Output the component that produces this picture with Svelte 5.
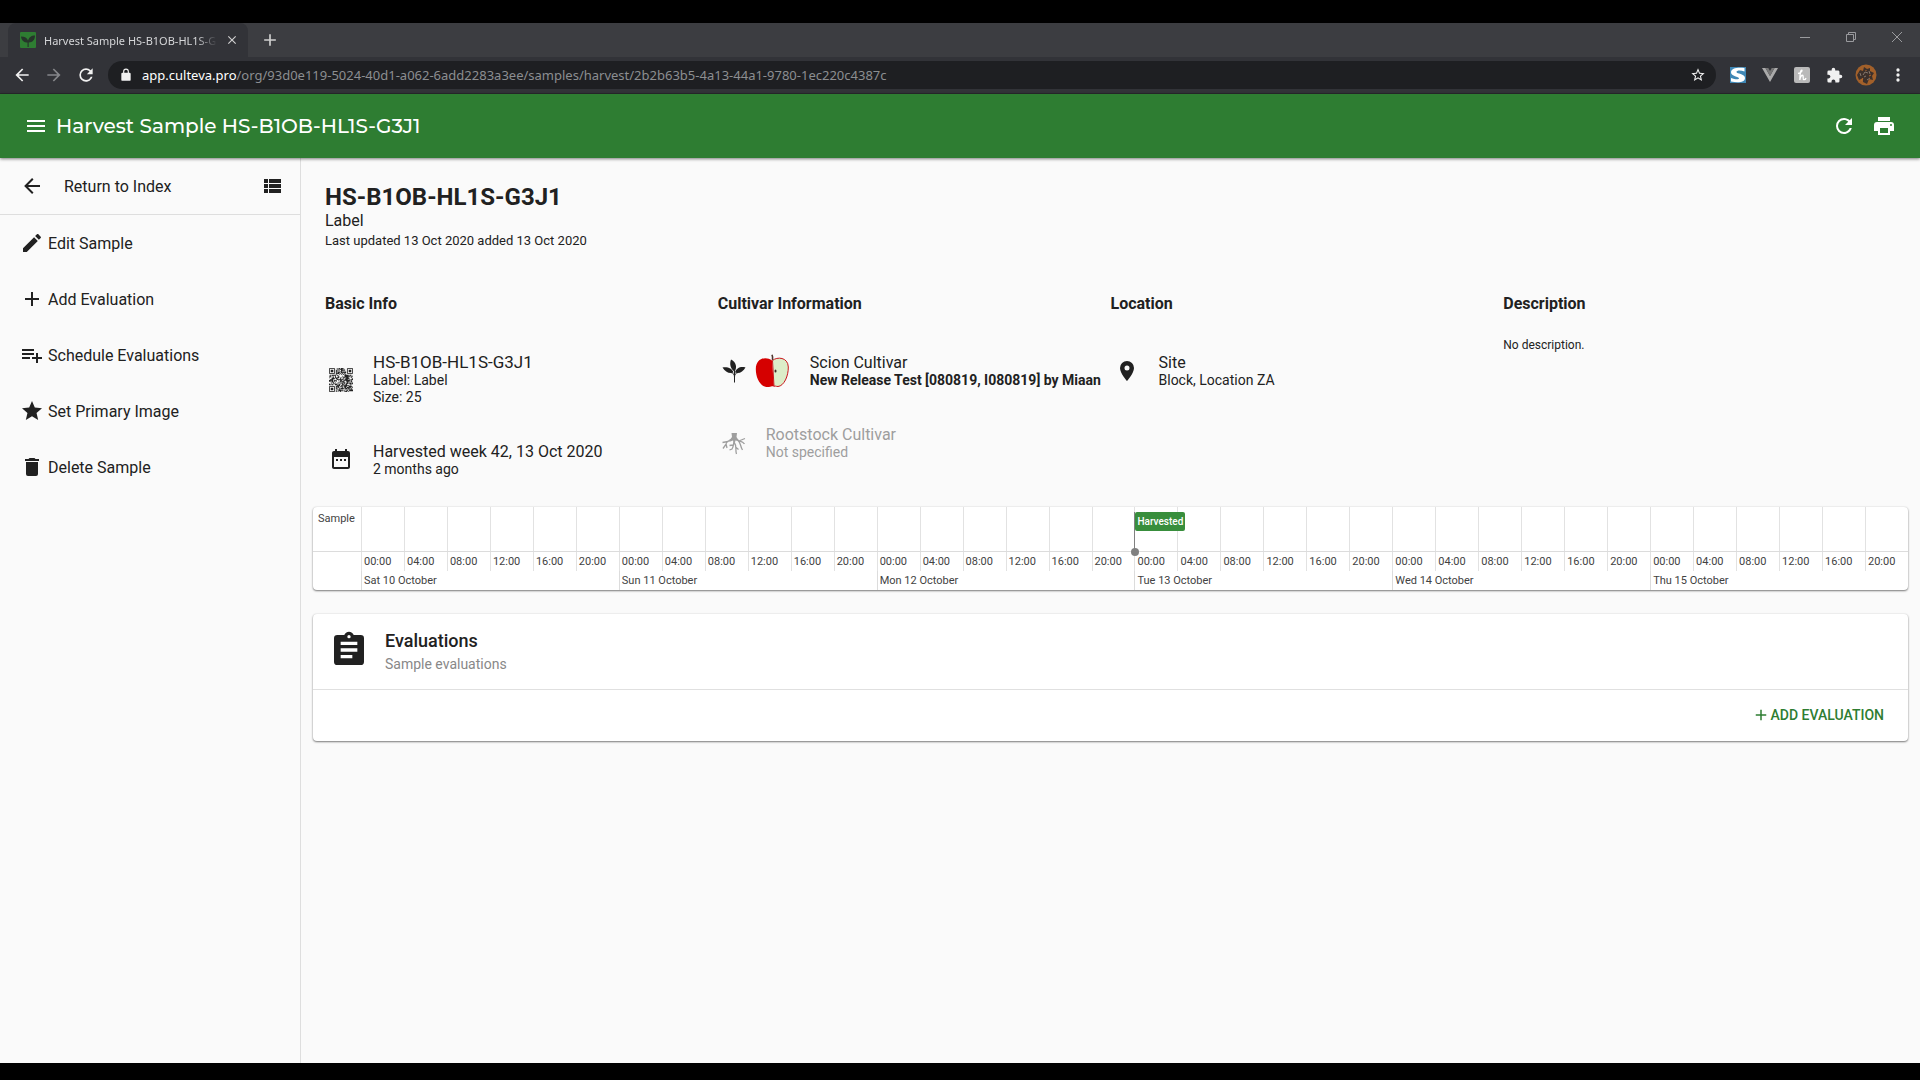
<script>
    const icons = {
        menu: "M3,6H21V8H3V6M3,11H21V13H3V11M3,16H21V18H3V16Z",
        refresh: "M17.65,6.35C16.2,4.9 14.21,4 12,4A8,8 0 0,0 4,12A8,8 0 0,0 12,20C15.73,20 18.84,17.45 19.73,14H17.65C16.83,16.33 14.61,18 12,18A6,6 0 0,1 6,12A6,6 0 0,1 12,6C13.66,6 15.14,6.69 16.22,7.78L13,11H20V4L17.65,6.35Z",
        print: "M18,3H6V7H18M19,12A1,1 0 0,1 18,11A1,1 0 0,1 19,10A1,1 0 0,1 20,11A1,1 0 0,1 19,12M16,19H8V14H16M19,8H5A3,3 0 0,0 2,11V17H6V21H18V17H22V11A3,3 0 0,0 19,8Z",
        back: "M20,11V13H8L13.5,18.5L12.08,19.92L4.16,12L12.08,4.08L13.5,5.5L8,11H20Z",
        forward: "M4,11V13H16L10.5,18.5L11.92,19.92L19.84,12L11.92,4.08L10.5,5.5L16,11H4Z",
        list: "M9,5V9H21V5M9,19H21V15H9M9,14H21V10H9M4,9H8V5H4M4,19H8V15H4M4,14H8V10H4V14Z",
        edit: "M20.71,7.04C21.1,6.65 21.1,6 20.71,5.63L18.37,3.29C18,2.9 17.35,2.9 16.96,3.29L15.12,5.12L18.87,8.87M3,17.25V21H6.75L17.81,9.93L14.06,6.18L3,17.25Z",
        plus: "M19,13H13V19H11V13H5V11H11V5H13V11H19V13Z",
        playlist: "M2,16H10V14H2M18,14V10H16V14H12V16H16V20H18V16H22V14M14,6H2V8H14M14,10H2V12H14V10Z",
        star: "M12,17.27L18.18,21L16.54,13.97L22,9.24L14.81,8.62L12,2L9.19,8.62L2,9.24L7.45,13.97L5.82,21L12,17.27Z",
        starOutline: "M12,15.39L8.24,17.66L9.23,13.38L5.91,10.5L10.29,10.13L12,6.09L13.71,10.13L18.09,10.5L14.77,13.38L15.76,17.66M22,9.24L14.81,8.63L12,2L9.19,8.63L2,9.24L7.45,13.97L5.82,21L12,17.27L18.18,21L16.54,13.97L22,9.24Z",
        trash: "M19,4H15.5L14.5,3H9.5L8.5,4H5V6H19M6,19A2,2 0 0,0 8,21H16A2,2 0 0,0 18,19V7H6V19Z",
        calendar: "M7,11H9V13H7V11M21,5V19C21,20.11 20.11,21 19,21H5C3.89,21 3,20.1 3,19V5C3,3.9 3.9,3 5,3H6V1H8V3H16V1H18V3H19A2,2 0 0,1 21,5M5,19H19V9H5V19M15,13V11H17V13H15M11,13V11H13V13H11Z",
        pin: "M12,11.5A2.5,2.5 0 0,1 9.5,9A2.5,2.5 0 0,1 12,6.5A2.5,2.5 0 0,1 14.5,9A2.5,2.5 0 0,1 12,11.5M12,2A7,7 0 0,0 5,9C5,14.25 12,22 12,22C12,22 19,14.25 19,9A7,7 0 0,0 12,2Z",
        clipboard: "M17,9H7V7H17M17,13H7V11H17M14,17H7V15H14M12,3A1,1 0 0,1 13,4A1,1 0 0,1 12,5A1,1 0 0,1 11,4A1,1 0 0,1 12,3M19,3H14.82C14.4,1.84 13.3,1 12,1C10.7,1 9.6,1.84 9.18,3H5A2,2 0 0,0 3,5V19A2,2 0 0,0 5,21H19A2,2 0 0,0 21,19V5A2,2 0 0,0 19,3Z",
        lock: "M18,8H17V6A5,5 0 0,0 7,6V8H6A2,2 0 0,0 4,10V20A2,2 0 0,0 6,22H18A2,2 0 0,0 20,20V10A2,2 0 0,0 18,8M9,6A3,3 0 0,1 15,6V8H9V6Z",
        close: "M19,6.41L17.59,5L12,10.59L6.41,5L5,6.41L10.59,12L5,17.59L6.41,19L12,13.41L17.59,19L19,17.59L13.41,12L19,6.41Z",
        puzzle: "M20.5,11H19V7C19,5.89 18.1,5 17,5H13V3.5A2.5,2.5 0 0,0 10.5,1A2.5,2.5 0 0,0 8,3.5V5H4A2,2 0 0,0 2,7V10.8H3.5C5,10.8 6.2,12 6.2,13.5C6.2,15 5,16.2 3.5,16.2H2V20A2,2 0 0,0 4,22H7.8V20.5C7.8,19 9,17.8 10.5,17.8C12,17.8 13.2,19 13.2,20.5V22H17A2,2 0 0,0 19,20V16H20.5A2.5,2.5 0 0,0 23,13.5A2.5,2.5 0 0,0 20.5,11Z",
        dots: "M12,16A2,2 0 0,1 14,18A2,2 0 0,1 12,20A2,2 0 0,1 10,18A2,2 0 0,1 12,16M12,10A2,2 0 0,1 14,12A2,2 0 0,1 12,14A2,2 0 0,1 10,12A2,2 0 0,1 12,10M12,4A2,2 0 0,1 14,6A2,2 0 0,1 12,8A2,2 0 0,1 10,6A2,2 0 0,1 12,4Z"
    };

    const code = "HS-B1OB-HL1S-G3J1";

    const actions = [
        { icon: icons.edit, label: "Edit Sample" },
        { icon: icons.plus, label: "Add Evaluation" },
        { icon: icons.playlist, label: "Schedule Evaluations" },
        { icon: icons.star, label: "Set Primary Image" },
        { icon: icons.trash, label: "Delete Sample" }
    ];

    const hours = ["00:00", "04:00", "08:00", "12:00", "16:00", "20:00"];
    const days = [
        { name: "Sat 10 October" },
        { name: "Sun 11 October" },
        { name: "Mon 12 October" },
        { name: "Tue 13 October", event: "Harvested" },
        { name: "Wed 14 October" },
        { name: "Thu 15 October" }
    ];

    // thumbnail modules, corners are left free for the finder squares
    function qrPath(size) {
        let d = "";
        let seed = 80819;
        for (let y = 0; y < size; y++) {
            for (let x = 0; x < size; x++) {
                seed = (seed * 16807) % 2147483647;
                const corner = (x < 8 && y < 8) || (x > size - 9 && y < 8) || (x < 8 && y > size - 9);
                if (!corner && seed / 2147483647 > 0.4) d += `M${x},${y}h1v1h-1z`;
            }
        }
        return d;
    }

    const qr = qrPath(28);
</script>

{#snippet icon(path, size = 24)}
    <svg width={size} height={size} viewBox="0 0 24 24" fill="currentColor" aria-hidden="true"><path d={path} /></svg>
{/snippet}

<div class="screen">
    <div class="browser">
        <div class="tabs">
            <div class="tab">
                <svg width="16" height="16" viewBox="0 0 16 16" aria-hidden="true">
                    <rect width="16" height="16" rx="1" fill="#2e7d32" />
                    <path d="M7.500 15V10.500C4 10.500 1.500 8.500 1 4.500C5 4.500 7 6 8 8.500C9 5.500 11 3.500 15 3.500C15 8 12.500 10.300 8.700 10.500V15Z" fill="#26352a" />
                </svg>
                <span class="tab-title">Harvest Sample {code}</span>
                <button class="tab-btn" aria-label="Close tab">{@render icon(icons.close, 14)}</button>
            </div>
            <button class="tab-btn new-tab" aria-label="New tab">{@render icon(icons.plus, 20)}</button>
            <div class="window-btns">
                <button aria-label="Minimize">
                    <svg width="10" height="10" viewBox="0 0 10 10"><path d="M0 5.500H10" /></svg>
                </button>
                <button aria-label="Restore">
                    <svg width="10" height="10" viewBox="0 0 10 10"><path d="M.5 2.500H7.500V9.500H.5ZM2.500 2V.5H9.500V7.500H8" /></svg>
                </button>
                <button aria-label="Close">
                    <svg width="10" height="10" viewBox="0 0 10 10"><path d="M0 0L10 10M10 0L0 10" /></svg>
                </button>
            </div>
        </div>
        <div class="toolbar">
            <button aria-label="Back">{@render icon(icons.back, 20)}</button>
            <button class="off" aria-label="Forward">{@render icon(icons.forward, 20)}</button>
            <button aria-label="Reload">{@render icon(icons.refresh, 20)}</button>
            <div class="address">
                {@render icon(icons.lock, 14)}
                <span class="url"><b>app.culteva.pro</b>/org/93d0e119-5024-40d1-a062-6add2283a3ee/samples/harvest/2b2b63b5-4a13-44a1-9780-1ec220c4387c</span>
                <button aria-label="Bookmark">{@render icon(icons.starOutline, 16)}</button>
            </div>
            <button aria-label="Stylus extension">
                <svg width="16" height="16" viewBox="0 0 16 16">
                    <rect width="16" height="16" fill="#3f87b5" />
                    <path d="M14.500 1V4.500C11 3 6.500 3 6.500 5C6.500 7 15 6.500 15 11C15 15.500 8 16 1 14.500V11C5 12.500 9 12.800 9 11.200C9 9.500 1 9.500 1 5.200C1 1 8 0 14.500 1Z" fill="#fff" />
                </svg>
            </button>
            <button aria-label="Vue extension">
                <svg width="16" height="16" viewBox="0 0 16 16">
                    <path d="M0 1H3.500L8 9L12.500 1H16L8 15Z" fill="#aaa" />
                    <path d="M3.500 1H6.300L8 4L9.700 1H12.500L8 9Z" fill="#777" />
                </svg>
            </button>
            <button aria-label="Honey extension">
                <svg width="16" height="16" viewBox="0 0 16 16">
                    <rect width="16" height="16" rx="2" fill="#b9b9b9" />
                    <path d="M4 6.500C6 6 8.500 4.500 8 3.200C7 2.500 5.800 6 5.800 13C6.200 10 7.500 8 8.800 8.300C9.800 9 8.500 12.500 9.800 12.700C10.800 12.800 11.700 12 12 11" fill="none" stroke="#fff" stroke-width="1.300" />
                </svg>
            </button>
            <button aria-label="Extensions">{@render icon(icons.puzzle, 17)}</button>
            <button aria-label="Profile">
                <svg width="22" height="22" viewBox="0 0 22 22">
                    <circle cx="11" cy="11" r="10.500" fill="#a2602a" />
                    <path d="M4 16L2 11L5 6L8 7L9 3L12 5L15 4L15 7L19 9L17 12L18 16L14 15L12 20L8 18L8 14Z" fill="#3c302b" />
                    <path d="M8 11L10 8L13 9M9 13L11 12M14 7L15 10M12 16L15 14M5 9L6 12" fill="none" stroke="#84766b" />
                    <path d="M6 17L8 14M11 6L11 7M16 11L14 12" fill="none" stroke="#b0692f" />
                </svg>
            </button>
            <button aria-label="Browser menu">{@render icon(icons.dots, 20)}</button>
        </div>
    </div>

    <header class="app-bar">
        <button aria-label="Menu">{@render icon(icons.menu)}</button>
        <h1>Harvest Sample {code}</h1>
        <button aria-label="Refresh">{@render icon(icons.refresh)}</button>
        <button aria-label="Print">{@render icon(icons.print)}</button>
    </header>

    <div class="page">
        <nav class="sidebar">
            <div class="return">
                <a href="#index">{@render icon(icons.back)}<span>Return to Index</span></a>
                <button aria-label="Show list">{@render icon(icons.list)}</button>
            </div>
            {#each actions as action}
                <button class="action">{@render icon(action.icon)}{action.label}</button>
            {/each}
        </nav>

        <main>
            <div class="title">
                <h2>{code}</h2>
                <p class="label">Label</p>
                <p class="updated">Last updated 13 Oct 2020 added 13 Oct 2020</p>
            </div>

            <div class="info">
                <section>
                    <h3>Basic Info</h3>
                    <div class="row">
                        <div class="slot">
                            <svg width="24" height="24" viewBox="0 0 28 28" aria-hidden="true">
                                <path d={qr} fill="#212121" />
                                <path d="M.5.5h6v6h-6zM21.500.5h6v6h-6zM.5 21.500h6v6h-6z" fill="none" stroke="#212121" />
                                <path d="M2 2h3v3h-3zM23 2h3v3h-3zM2 23h3v3h-3z" fill="#212121" />
                            </svg>
                        </div>
                        <div class="text">
                            <p class="code">{code}</p>
                            <small>Label: Label</small>
                            <small>Size: 25</small>
                        </div>
                    </div>
                    <div class="row">
                        <div class="slot">{@render icon(icons.calendar)}</div>
                        <div class="text">
                            <p>Harvested week 42, 13 Oct 2020</p>
                            <small>2 months ago</small>
                        </div>
                    </div>
                </section>
                <section>
                    <h3>Cultivar Information</h3>
                    <div class="row">
                        <div class="slot">
                            <svg width="24" height="24" viewBox="0 0 24 24" fill="currentColor" aria-hidden="true">
                                <path d="M9 .5C14 3 15.500 8.500 12.500 12.500C8.500 10 7.200 5 9 .5Z" />
                                <path d="M.5 8.500C5 7.500 10 9 11.500 13.500C7.500 15 3 13 .5 8.500Z" />
                                <path d="M23.500 8.500C19 7 14 9 13 13.500C17 15 21 13 23.500 8.500Z" />
                                <path d="M12.500 11V23.500M9 13.500C11 14 12.500 15 12.500 18M16 13.500C14 14 12.500 15 12.500 18" fill="none" stroke="currentColor" />
                            </svg>
                        </div>
                        <div class="fruit">
                            <svg width="34" height="34" viewBox="0 0 34 34" aria-hidden="true">
                                <path d="M17 6.500C11 2 1 4 .8 15C.8 25 6 34 14 33C16 33 17 32 19 32.500Z" fill="#d50000" />
                                <path d="M17.500 6.500C22 2.500 33 3 33.300 13C33.500 22 29 32 23 32.500C21 32.500 20 31.500 19 32.500Z" fill="#dcedc8" stroke="#c9151b" />
                                <path d="M17.500 6C18 3.500 17.500 2 17 .8" fill="none" stroke="#4e342e" stroke-width="1.600" />
                                <ellipse cx="20.500" cy="17" rx="1" ry="1.500" fill="#3e2723" />
                            </svg>
                        </div>
                        <div class="text">
                            <p>Scion Cultivar</p>
                            <small><b>New Release Test [080819, I080819] by Miaan</b></small>
                        </div>
                    </div>
                    <div class="row faded">
                        <div class="slot">
                            <svg width="24" height="24" viewBox="0 0 24 24" fill="none" stroke="currentColor" aria-hidden="true">
                                <path d="M9.500 2H15L14.500 6L17 10L13.500 9.500L12.500 13L11 9.500L7 11L10 6Z" fill="currentColor" stroke="none" />
                                <path d="M10.500 7C8 10 4 10 3.500 14L1 17.500M6 10.500L.5 11.500M4 13L5 17M14 8C17 11 20 9 22.500 13M18 9.500L23 7.500M16 9.500C19 12 18 15 20.500 19M12.500 9C11 13 12 15 10 18L7.500 19M12.500 12C15 15 13 18 14.500 23M13.500 16L16.500 18.500M11 14L7.500 14.500" stroke-width="1.300" />
                            </svg>
                        </div>
                        <div class="text">
                            <p>Rootstock Cultivar</p>
                            <small>Not specified</small>
                        </div>
                    </div>
                </section>
                <section>
                    <h3>Location</h3>
                    <div class="row">
                        <div class="slot">{@render icon(icons.pin)}</div>
                        <div class="text">
                            <p>Site</p>
                            <small>Block, Location ZA</small>
                        </div>
                    </div>
                </section>
                <section>
                    <h3>Description</h3>
                    <p class="description">No description.</p>
                </section>
            </div>

            <div class="card timeline">
                <div class="lane">
                    <div class="lane-name">Sample</div>
                </div>
                {#each days as day}
                    <div class="day">
                        <div class="hours">
                            {#each hours as hour}
                                <div class="hour"><span>{hour}</span></div>
                            {/each}
                        </div>
                        <div class="day-name">{day.name}</div>
                        {#if day.event}
                            <div class="event"><span>{day.event}</span></div>
                        {/if}
                    </div>
                {/each}
            </div>

            <div class="card evaluations">
                <div class="card-head">
                    {@render icon(icons.clipboard, 40)}
                    <div>
                        <h4>Evaluations</h4>
                        <p>Sample evaluations</p>
                    </div>
                </div>
                <div class="card-foot">
                    <button>{@render icon(icons.plus, 18)}Add Evaluation</button>
                </div>
            </div>
        </main>
    </div>
</div>

<style>
    :global(body) {
        margin: 0;
        background: #000;
    }

    .screen {
        box-sizing: border-box;
        min-height: 100vh;
        display: flex;
        flex-direction: column;
        border: solid #000;
        border-width: 23px 0 17px;
        background: #fafafa;
        color: #212121;
        font-family: Roboto, "Liberation Sans", sans-serif;
        font-size: 16px;
    }

    h1, h2, h3, h4, p {
        margin: 0;
        font-weight: 400;
    }

    button {
        border: none;
        padding: 0;
        background: none;
        color: inherit;
        font: inherit;
        display: flex;
        align-items: center;
        cursor: pointer;
    }

    svg {
        display: block;
        flex: none;
    }

    /* browser frame */
    .browser {
        background: #323338;
        color: #f1f1f1;
        font-family: "Segoe UI", "Noto Sans", sans-serif;
    }

    .tabs {
        display: flex;
        align-items: center;
        height: 34px;
        background: #3c3d41;
    }

    .tab {
        box-sizing: border-box;
        display: flex;
        align-items: center;
        gap: 8px;
        width: 240px;
        height: 34px;
        margin-left: 8px;
        padding: 0 9px 0 12px;
        border-radius: 8px 8px 0 0;
        background: #323338;
    }

    .tab-title {
        flex: 1;
        overflow: hidden;
        white-space: nowrap;
        font-size: 11px;
        color: #d5d6d8;
        mask-image: linear-gradient(to right, #000 88%, transparent);
    }

    .tab-btn {
        color: #d0d0d0;
    }

    .new-tab {
        margin-left: 12px;
    }

    .window-btns {
        display: flex;
        gap: 36px;
        margin: 0 18px 6px auto;
    }

    .window-btns svg {
        fill: none;
        stroke: #9a9b9e;
    }

    .toolbar {
        display: flex;
        align-items: center;
        height: 36px;
        padding: 0 6px;
        border-bottom: 1px solid #28292c;
    }

    .toolbar > button {
        width: 32px;
        justify-content: center;
    }

    .toolbar .off {
        color: #85868a;
    }

    .address {
        flex: 1;
        display: flex;
        align-items: center;
        gap: 9px;
        height: 28px;
        margin: 0 6px;
        padding: 0 10px 0 11px;
        border-radius: 14px;
        background: #1e1f22;
        font-size: 13px;
    }

    .url {
        flex: 1;
        white-space: nowrap;
        color: #8c8e91;
    }

    .url b {
        font-weight: 400;
        color: #fff;
    }

    /* app */
    .app-bar {
        position: relative;
        display: flex;
        align-items: center;
        gap: 16px;
        height: 64px;
        padding: 0 24px;
        background: #2e7d32;
        color: #fff;
        box-shadow: 0 1px 3px rgba(0, 0, 0, 0.5);
    }

    .app-bar h1 {
        flex: 1;
        margin-left: -8px;
        font-family: Montserrat, Inter, sans-serif;
        font-size: 20px;
        line-height: 26px;
        font-weight: 500;
    }

    .page {
        flex: 1;
        display: flex;
    }

    .sidebar {
        flex: none;
        width: 300px;
        border-right: 1px solid #dedede;
    }

    .return {
        display: flex;
        align-items: center;
        justify-content: space-between;
        height: 56px;
        padding: 0 16px 0 20px;
        border-bottom: 1px solid #dedede;
    }

    .return a {
        display: flex;
        align-items: center;
        gap: 20px;
        color: inherit;
        text-decoration: none;
    }

    .action {
        gap: 4px;
        width: 100%;
        height: 56px;
        padding: 0 20px;
    }

    main {
        flex: 1;
        min-width: 0;
        padding: 25px 12px;
    }

    .title {
        padding: 0 12px;
    }

    h2 {
        font-size: 24px;
        line-height: 28px;
        font-weight: 700;
    }

    .label {
        line-height: 20px;
    }

    .updated {
        font-size: 13px;
        line-height: 20px;
    }

    .info {
        display: grid;
        grid-template-columns: repeat(4, minmax(0, 1fr));
        padding: 43px 12px 29px;
    }

    .info section {
        display: flex;
        flex-direction: column;
        gap: 36px;
    }

    h3 {
        font-size: 16px;
        line-height: 20px;
        font-weight: 700;
        margin-bottom: 3px;
    }

    .row {
        display: flex;
        align-items: center;
    }

    .slot {
        display: flex;
        justify-content: center;
        width: 32px;
    }

    .fruit {
        padding: 0 5px;
    }

    .text {
        margin-left: 16px;
        white-space: nowrap;
    }

    .text p {
        line-height: 19px;
    }

    .text .code {
        font-size: 17px;
    }

    .text small {
        display: block;
        font-size: 14px;
        line-height: 17px;
    }

    .text b {
        font-weight: 700;
    }

    .faded {
        color: #9e9e9e;
    }

    .description {
        margin-top: -18px;
        font-size: 12px;
        line-height: 20px;
    }

    .card {
        border-radius: 4px;
        background: #fff;
        box-shadow: 0 1px 2px rgba(0, 0, 0, 0.5), 0 0 2px rgba(0, 0, 0, 0.1);
    }

    .timeline {
        display: flex;
        height: 83px;
        font-size: 11px;
        color: #424242;
    }

    .lane {
        width: 48px;
    }

    .lane-name {
        box-sizing: border-box;
        height: 45px;
        padding: 5px;
        border-bottom: 1px solid #dcdcdc;
    }

    .day {
        position: relative;
        flex: 1;
        box-shadow: inset 1px 0 #dcdcdc;
    }

    .hours {
        display: grid;
        grid-template-columns: repeat(6, 1fr);
    }

    .hour {
        height: 64px;
        box-shadow: inset 1px 0 #e2e2e2;
    }

    .hour::before {
        content: "";
        display: block;
        height: 44px;
        border-bottom: 1px solid #dcdcdc;
    }

    .hour span {
        display: block;
        padding-left: 3px;
        line-height: 19px;
    }

    .day-name {
        padding-left: 3px;
        line-height: 19px;
    }

    /* flag, pole and dot on the time axis */
    .event {
        position: absolute;
        top: 5px;
        left: 0;
        height: 40px;
        border-left: 1px solid #808080;
    }

    .event span {
        display: block;
        padding: 0 2px;
        border-radius: 2px;
        background: #388e3c;
        color: #fff;
        font-size: 10px;
        line-height: 19px;
        font-weight: 500;
    }

    .event::after {
        content: "";
        position: absolute;
        left: -4px;
        bottom: -4px;
        width: 8px;
        height: 8px;
        border-radius: 50%;
        background: #808080;
    }

    .evaluations {
        margin-top: 24px;
    }

    .card-head {
        display: flex;
        align-items: center;
        gap: 16px;
        height: 75px;
        padding: 0 16px;
        border-bottom: 1px solid #e0e0e0;
    }

    .card-head svg {
        margin-bottom: 4px;
    }

    h4 {
        font-size: 18px;
        line-height: 24px;
        font-weight: 500;
    }

    .card-head p {
        font-size: 14px;
        line-height: 22px;
        color: #888;
    }

    .card-foot {
        display: flex;
        justify-content: flex-end;
        padding: 7px 24px 9px;
    }

    .card-foot button {
        height: 35px;
        color: #2e7d32;
        font-size: 14px;
        font-weight: 500;
        text-transform: uppercase;
    }
</style>
